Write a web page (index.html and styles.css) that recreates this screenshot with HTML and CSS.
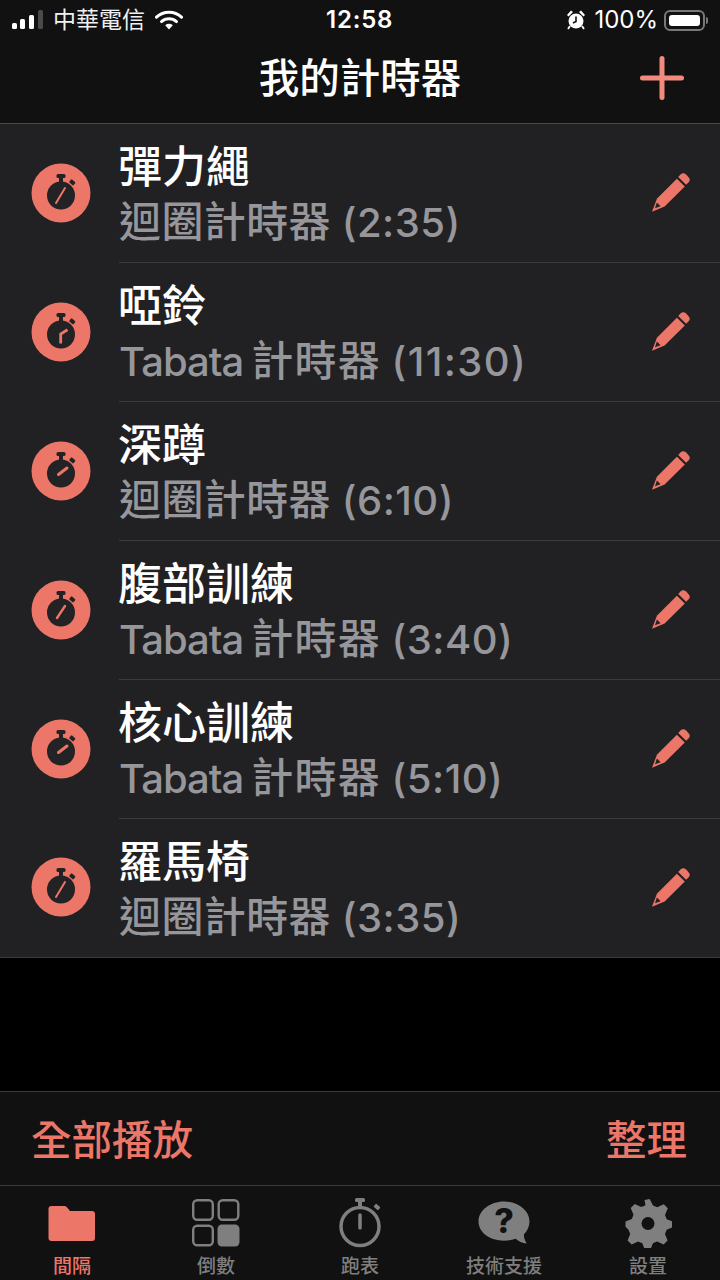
FILE: index.html
```html
<!DOCTYPE html>
<html lang="zh-Hant">
<head>
<meta charset="utf-8">
<title>我的計時器</title>
<link rel="stylesheet" href="styles.css">
</head>
<body>
<svg class="defs" width="0" height="0" aria-hidden="true">
  <symbol id="watch" viewBox="0 0 60 60">
    <circle cx="30" cy="30" r="29.500" fill="#ec7668"/>
    <rect x="25.500" y="11" width="9" height="4" rx="1.500" fill="#232225"/>
    <rect x="28" y="13" width="4" height="6" fill="#232225"/>
    <rect x="38.500" y="17.500" width="5.500" height="4" rx="1" fill="#232225" transform="rotate(42 41.500 19.500)"/>
    <circle cx="30" cy="32.500" r="14" fill="#232225"/>
  </symbol>
  <symbol id="pencil" viewBox="0 0 40 40">
    <path d="M29.500 2.600a4 4 0 0 1 5.600 0l2.300 2.300a4 4 0 0 1 0 5.600l-2.300 2.300-7.900-7.900z" fill="#ec7668"/>
    <path d="M25.900 6.700l7.900 7.900-20.200 20-12.600 5.200 4.900-13z" fill="#ec7668"/>
    <path d="M4 36.300l1.900-5.700 3.700 3.700z" fill="#232225"/>
  </symbol>
</svg>

<div class="app">
  <header class="top">
    <div class="status">
      <div class="status-left">
        <svg class="signal" width="32" height="20" viewBox="0 0 32 20"><rect x="0" y="13" width="5" height="6" rx="1.500" fill="#fff"/><rect x="8" y="9" width="5" height="10" rx="1.500" fill="#fff"/><rect x="17" y="5" width="5" height="14" rx="1.500" fill="#fff"/><rect x="26" y="0" width="5" height="19" rx="1.500" fill="#4a4a4c"/></svg>
        <span class="carrier">中華電信</span>
        <svg class="wifi" width="28" height="20" viewBox="0 0 28 20"><path d="M1.500 7.200C8.500 .6 19.500 .6 26.500 7.200" fill="none" stroke="#fff" stroke-width="3" stroke-linecap="round"/><path d="M6.500 11.600C10.800 7.800 17.200 7.800 21.500 11.600" fill="none" stroke="#fff" stroke-width="3" stroke-linecap="round"/><path d="M10.200 15.200C12.600 13.400 15.400 13.400 17.800 15.200L14 19.500z" fill="#fff"/></svg>
      </div>
      <span class="clock">12:58</span>
      <div class="status-right">
        <svg class="alarm" width="20" height="22" viewBox="0 0 20 22"><circle cx="10" cy="12" r="7.500" fill="#fff"/><path d="M1 6l4-4.500 2 1.500-4.500 4.500zM19 6l-4-4.500-2 1.500 4.500 4.500z" fill="#fff"/><path d="M10 7.500v5l-3 1.500" fill="none" stroke="#111" stroke-width="1.600"/><path d="M4 17l-2 3M16 17l2 3" stroke="#fff" stroke-width="1.800"/></svg>
        <span class="percent">100%</span>
        <div class="battery"><div class="battery-fill"></div></div>
        <div class="battery-cap"></div>
      </div>
    </div>
    <div class="nav">
      <h1 class="nav-title">我的計時器</h1>
      <svg class="plus" width="44" height="44" viewBox="0 0 44 44"><path d="M22 2.500v39M2.500 22h39" stroke="#f28b7e" stroke-width="5" stroke-linecap="round"/></svg>
    </div>
  </header>

  <main class="list">
    <div class="row">
      <svg class="row-icon" width="60" height="60" viewBox="0 0 60 60"><use href="#watch"/><path d="M25 40L34 25" stroke="#ec7668" stroke-width="2" stroke-linecap="round"/></svg>
      <div class="row-body">
        <div class="row-text"><div class="row-title">彈力繩</div><div class="row-sub"><span class="cjk">迴圈計時器</span> <span class="time">(2:35)</span></div></div>
        <svg class="pencil" width="40" height="40" viewBox="0 0 40 40"><use href="#pencil"/></svg>
      </div>
    </div>
    <div class="row">
      <svg class="row-icon" width="60" height="60" viewBox="0 0 60 60"><use href="#watch"/><path d="M29.700 41.500V32l6.800-4.200" fill="none" stroke="#ec7668" stroke-width="2.800"/></svg>
      <div class="row-body">
        <div class="row-text"><div class="row-title">啞鈴</div><div class="row-sub"><span class="latin">Tabata</span><span class="cjk cjk-after">計時器</span> <span class="time time-wide">(11:30)</span></div></div>
        <svg class="pencil" width="40" height="40" viewBox="0 0 40 40"><use href="#pencil"/></svg>
      </div>
    </div>
    <div class="row">
      <svg class="row-icon" width="60" height="60" viewBox="0 0 60 60"><use href="#watch"/><path d="M27.500 33.500L36 27" stroke="#ec7668" stroke-width="3" stroke-linecap="round"/></svg>
      <div class="row-body">
        <div class="row-text"><div class="row-title">深蹲</div><div class="row-sub"><span class="cjk">迴圈計時器</span> <span class="time">(6:10)</span></div></div>
        <svg class="pencil" width="40" height="40" viewBox="0 0 40 40"><use href="#pencil"/></svg>
      </div>
    </div>
    <div class="row">
      <svg class="row-icon" width="60" height="60" viewBox="0 0 60 60"><use href="#watch"/><path d="M26 38L34 26" stroke="#ec7668" stroke-width="2.400" stroke-linecap="round"/></svg>
      <div class="row-body">
        <div class="row-text"><div class="row-title">腹部訓練</div><div class="row-sub"><span class="latin">Tabata</span><span class="cjk cjk-after">計時器</span> <span class="time">(3:40)</span></div></div>
        <svg class="pencil" width="40" height="40" viewBox="0 0 40 40"><use href="#pencil"/></svg>
      </div>
    </div>
    <div class="row">
      <svg class="row-icon" width="60" height="60" viewBox="0 0 60 60"><use href="#watch"/><path d="M27.500 33.500L36 27" stroke="#ec7668" stroke-width="3" stroke-linecap="round"/></svg>
      <div class="row-body">
        <div class="row-text"><div class="row-title">核心訓練</div><div class="row-sub"><span class="latin">Tabata</span><span class="cjk cjk-after">計時器</span> <span class="time">(5:10)</span></div></div>
        <svg class="pencil" width="40" height="40" viewBox="0 0 40 40"><use href="#pencil"/></svg>
      </div>
    </div>
    <div class="row">
      <svg class="row-icon" width="60" height="60" viewBox="0 0 60 60"><use href="#watch"/><path d="M25 40L34 25" stroke="#ec7668" stroke-width="2" stroke-linecap="round"/></svg>
      <div class="row-body">
        <div class="row-text"><div class="row-title">羅馬椅</div><div class="row-sub"><span class="cjk">迴圈計時器</span> <span class="time">(3:35)</span></div></div>
        <svg class="pencil" width="40" height="40" viewBox="0 0 40 40"><use href="#pencil"/></svg>
      </div>
    </div>
  </main>

  <div class="spacer"></div>

  <div class="toolbar">
    <span class="action">全部播放</span>
    <span class="action">整理</span>
  </div>

  <nav class="tabs">
    <div class="tab tab-active">
      <svg class="tab-icon" width="48" height="50" viewBox="0 0 48 50"><path d="M.5 11a3 3 0 0 1 3-3h13a3 3 0 0 1 2.200 1l3.300 4H44a3 3 0 0 1 3 3v24a3 3 0 0 1-3 3H3.500a3 3 0 0 1-3-3z" fill="#ec7668"/></svg>
      <span class="tab-label">間隔</span>
    </div>
    <div class="tab">
      <svg class="tab-icon" width="48" height="50" viewBox="0 0 48 50"><rect x="1.200" y="2.200" width="19.600" height="19.600" rx="4" fill="none" stroke="#7f7f7f" stroke-width="2.400"/><rect x="26.700" y="2.200" width="19.600" height="19.600" rx="4" fill="none" stroke="#7f7f7f" stroke-width="2.400"/><rect x="1.200" y="27.700" width="19.600" height="19.600" rx="4" fill="none" stroke="#7f7f7f" stroke-width="2.400"/><rect x="25.500" y="26.500" width="22" height="22" rx="4.500" fill="#7f7f7f"/></svg>
      <span class="tab-label">倒數</span>
    </div>
    <div class="tab">
      <svg class="tab-icon" width="48" height="50" viewBox="0 0 48 50"><circle cx="24" cy="28.500" r="19" fill="none" stroke="#7f7f7f" stroke-width="3.500"/><rect x="19" y="0" width="10" height="4" rx="1.500" fill="#7f7f7f"/><rect x="22" y="2" width="4" height="7" fill="#7f7f7f"/><rect x="38" y="7" width="6" height="4" rx="1" fill="#7f7f7f" transform="rotate(42 41 9)"/><path d="M24 17v13" stroke="#7f7f7f" stroke-width="3.500" stroke-linecap="round"/></svg>
      <span class="tab-label">跑表</span>
    </div>
    <div class="tab">
      <svg class="tab-icon tab-icon-wide" width="52" height="50" viewBox="0 0 52 50"><path d="M26 3.500c14 0 25.500 8.800 25.500 20 0 4.800-2 9.200-5.500 12.700-.3 2.600.6 6 2.700 9.300-4.500-.6-8.200-2.200-11-4.800-3.500 1.300-7.300 2-11.700 2C12 42.700.5 34.500.5 23.500S12 3.500 26 3.500z" fill="#7f7f7f"/><text class="bubble-mark" x="26" y="35" text-anchor="middle">?</text></svg>
      <span class="tab-label">技術支援</span>
    </div>
    <div class="tab">
      <svg class="tab-icon" width="48" height="50" viewBox="0 0 48 50"><path d="M19.500 3l5.200-1 3.300 6.500 4.200 1.700 6.600-3 4 4-2.800 6.800 1.700 4.200 6.300 2.400v5.400l-6.300 2.800-1.700 4.200 2.600 6.600-4 3.800-6.500-2.800-4.200 1.700-2.600 6.600h-5.400l-2.600-6.600-4.200-1.700-6.500 2.800-4-3.800 2.600-6.600-1.700-4.200L.5 29.800v-5.400l6.300-2.400 1.700-4.200-2.800-6.800 4-4 6.600 3 4.200-1.700z" fill="#7f7f7f" transform="translate(1 -1)"/><circle cx="24" cy="25.500" r="6.500" fill="#111112"/></svg>
      <span class="tab-label">設置</span>
    </div>
  </nav>
</div>
</body>
</html>
```

FILE: styles.css
```css
* { box-sizing: border-box; }

html, body {
  margin: 0;
  padding: 0;
  background: #000;
}

.defs { position: absolute; }

.app {
  width: 720px;
  height: 1280px;
  display: flex;
  flex-direction: column;
  overflow: hidden;
  background: #000;
  color: #fff;
  font-family: "Inter", "Noto Sans CJK TC", sans-serif;
}

.top {
  height: 124px;
  flex: none;
  background: #111112;
  border-bottom: 1px solid #4a4a4d;
}

.status {
  height: 40px;
  padding: 0 12px 0 12px;
  display: flex;
  align-items: center;
  justify-content: space-between;
  position: relative;
}

.status-left, .status-right {
  display: flex;
  align-items: center;
}

.signal { margin-right: 9px; }

.carrier {
  font-size: 23px;
  line-height: 28px;
  color: #f0f0f0;
  margin-right: 10px;
}

.clock {
  position: absolute;
  left: 326px;
  top: 6px;
  font-size: 24px;
  line-height: 28px;
  font-weight: 600;
  letter-spacing: .8px;
}

.alarm { margin-right: 8px; }

.percent {
  font-size: 24px;
  line-height: 28px;
  margin-right: 6px;
}

.battery {
  width: 41px;
  height: 21px;
  padding: 3px;
  border: 2px solid #79797b;
  border-radius: 6px;
}

.battery-fill {
  height: 100%;
  background: #fff;
  border-radius: 3px;
}

.battery-cap {
  width: 2px;
  height: 7px;
  margin-left: 1px;
  background: #79797b;
  border-radius: 0 2px 2px 0;
}

.nav {
  height: 83px;
  position: relative;
  display: flex;
  align-items: center;
  justify-content: center;
  padding-bottom: 6px;
}

.nav-title {
  margin: 0;
  font-size: 40.5px;
  line-height: 56px;
  font-weight: 500;
  color: #fff;
}

.plus {
  position: absolute;
  left: 640px;
  top: 16px;
}

.list {
  flex: none;
  background: #212124;
  border-bottom: 1px solid #3c3c40;
}

.row {
  height: 139px;
  display: flex;
  align-items: center;
  padding-left: 31px;
}

.row:last-child { height: 138px; }

.row-icon {
  flex: none;
  margin-right: 28px;
  margin-top: -2px;
}

.row-body {
  flex: 1;
  align-self: stretch;
  display: flex;
  align-items: center;
  justify-content: space-between;
  padding-right: 29px;
  border-bottom: 1px solid #3c3c40;
}

.row:last-child .row-body { border-bottom: 0; }

.row-text { margin-top: 2px; }

.row-title {
  font-size: 44px;
  line-height: 56px;
  font-weight: 500;
  color: #fff;
  margin-left: -1px;
}

.row-sub {
  font-size: 40px;
  line-height: 54px;
  font-weight: 500;
  color: #96969b;
  white-space: nowrap;
}

.cjk {
  font-size: 42px;
  letter-spacing: .4px;
}

.latin { letter-spacing: -1px; }

.cjk-after {
  margin-left: 8px;
  letter-spacing: 1.2px;
}

.time { letter-spacing: .5px; }

.time-wide { letter-spacing: 1.4px; }

.pencil { margin-top: -2px; }

.spacer { flex: 1; }

.toolbar {
  height: 95px;
  flex: none;
  background: #111112;
  border-top: 1px solid #3a3a3c;
  border-bottom: 1px solid #3a3a3c;
  padding: 4px 33px 0 31px;
  display: flex;
  align-items: center;
  justify-content: space-between;
}

.action {
  font-size: 40.5px;
  line-height: 56px;
  font-weight: 500;
  color: #ec7668;
}

.tabs {
  height: 94px;
  flex: none;
  background: #111112;
  display: grid;
  grid-template-columns: repeat(5, 144px);
}

.tab {
  display: flex;
  flex-direction: column;
  align-items: center;
  padding-top: 12px;
  color: #7f7f7f;
}

.tab-active { color: #ec7668; }

.tab-icon { flex: none; }

.tab-label {
  margin-top: 7px;
  font-size: 19px;
  line-height: 24px;
  font-weight: 500;
}

.bubble-mark {
  font-family: "Inter", sans-serif;
  font-size: 34px;
  font-weight: 800;
  fill: #111112;
}
```
